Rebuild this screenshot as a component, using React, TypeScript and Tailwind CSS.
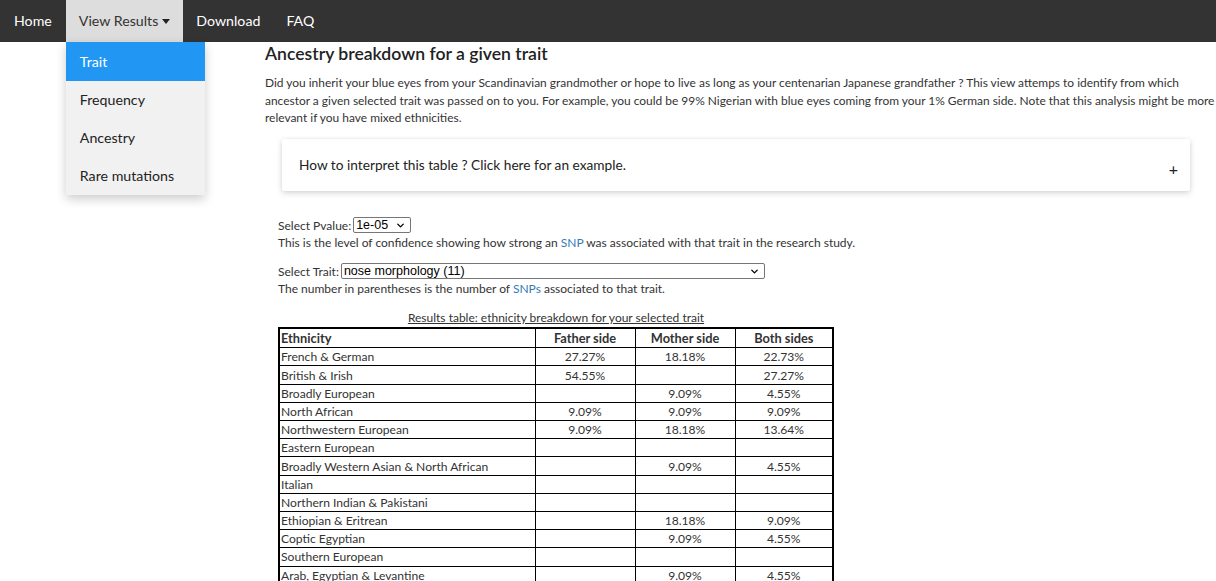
import { ChevronDown } from "lucide-react";

const rows: [string, string, string, string][] = [
  ["French & German", "27.27%", "18.18%", "22.73%"],
  ["British & Irish", "54.55%", "", "27.27%"],
  ["Broadly European", "", "9.09%", "4.55%"],
  ["North African", "9.09%", "9.09%", "9.09%"],
  ["Northwestern European", "9.09%", "18.18%", "13.64%"],
  ["Eastern European", "", "", ""],
  ["Broadly Western Asian & North African", "", "9.09%", "4.55%"],
  ["Italian", "", "", ""],
  ["Northern Indian & Pakistani", "", "", ""],
  ["Ethiopian & Eritrean", "", "18.18%", "9.09%"],
  ["Coptic Egyptian", "", "9.09%", "4.55%"],
  ["Southern European", "", "", ""],
  ["Arab, Egyptian & Levantine", "", "9.09%", "4.55%"],
  ["Ashkenazi Jewish", "", "", ""],
];

function FakeSelect({ value, width }: { value: string; width: string }) {
  return (
    <span className={`inline-flex h-[16px] items-center justify-between rounded-[2px] border border-[#767676] bg-white pl-[2px] pr-[4px] align-middle text-[12.5px] text-black ${width}`} style={{ fontFamily: '"Liberation Sans", Arial, sans-serif' }}>
      <span className="leading-none">{value}</span>
      <ChevronDown className="h-[11px] w-[11px]" strokeWidth={3} />
    </span>
  );
}

export default function App() {
  return (
    <div className="h-[581px] overflow-hidden bg-white text-[#333]" style={{ fontFamily: 'Lato, "Open Sans", sans-serif' }}>
      <nav className="relative flex h-[42px] items-stretch bg-[#333] text-[14.2px] text-white">
        <a className="flex items-center px-[14px]">Home</a>
        <div className="relative">
          <a className="flex h-full items-center gap-[4px] bg-[#ddd] pl-[13px] pr-[13px] text-[#333]">
            View Results
            <svg width="8" height="5" viewBox="0 0 8 5"><path d="M0 0h8L4 5z" fill="#222" /></svg>
          </a>
          <div className="absolute left-0 top-[42px] z-10 w-[139px] bg-[#f1f1f1] text-[14.2px] text-[#222] shadow-[0_4px_10px_rgba(0,0,0,0.2)]">
            <div className="flex h-[39px] items-center bg-[#2196f3] px-[14px] text-white">Trait</div>
            <div className="flex h-[38px] items-center px-[14px]">Frequency</div>
            <div className="flex h-[38px] items-center px-[14px]">Ancestry</div>
            <div className="flex h-[38px] items-center px-[14px]">Rare mutations</div>
          </div>
        </div>
        <a className="flex items-center px-[13px]">Download</a>
        <a className="flex items-center px-[13px]">FAQ</a>
      </nav>

      <main className="ml-[265px] w-[956px]">
        <h2 className="mt-[1px] text-[17.6px] font-semibold leading-[22px] text-[#222]">Ancestry breakdown for a given trait</h2>
        <p className="mt-[9px] text-[11.95px] leading-[17.6px]">
          Did you inherit your blue eyes from your Scandinavian grandmother or hope to live as long as your centenarian Japanese grandfather ? This view attemps to identify from which ancestor a given selected trait was passed on to you. For example, you could be 99% Nigerian with blue eyes coming from your 1% German side. Note that this analysis might be more relevant if you have mixed ethnicities.
        </p>

        <div className="ml-[17px] mt-[12px] flex h-[52px] w-[908px] items-center justify-between rounded-[2px] bg-white pl-[17px] pr-[12px] shadow-[0_2px_6px_rgba(0,0,0,0.16),0_0_3px_rgba(0,0,0,0.06)]">
          <span className="text-[13.7px] text-[#222]">How to interpret this table ? Click here for an example.</span>
          <span className="mt-[8px] text-[16px] leading-none text-[#222]">+</span>
        </div>

        <div className="ml-[13px] mt-[26px] text-[12px] leading-[17px]">
          <div className="flex items-center gap-[2px]">
            <span>Select Pvalue:</span>
            <FakeSelect value="1e-05" width="w-[58px]" />
          </div>
          <div>
            This is the level of confidence showing how strong an <span className="text-[#337ab7]">SNP</span> was associated with that trait in the research study.
          </div>
          <div className="mt-[12px] flex items-center gap-[2px]">
            <span>Select Trait:</span>
            <FakeSelect value="nose morphology (11)" width="w-[424px]" />
          </div>
          <div>
            The number in parentheses is the number of <span className="text-[#337ab7]">SNPs</span> associated to that trait.
          </div>

          <table className="mt-[12px] w-[556px] border-collapse border-2 border-black text-[12.1px] leading-[17px]">
            <caption className="pb-[1px] text-[12px] underline">Results table: ethnicity breakdown for your selected trait</caption>
            <thead>
              <tr className="h-[20px]">
                <th className="w-[256px] border border-black pl-[1px] text-left text-[12.8px] font-bold">Ethnicity</th>
                <th className="w-[100px] border border-black text-center text-[12.8px] font-bold">Father side</th>
                <th className="w-[100px] border border-black text-center text-[12.8px] font-bold">Mother side</th>
                <th className="border border-black text-center text-[12.8px] font-bold">Both sides</th>
              </tr>
            </thead>
            <tbody>
              {rows.map((r) => (
                <tr key={r[0]} className="h-[18.2px]">
                  <td className="border border-black pl-[1px]">{r[0]}</td>
                  <td className="border border-black text-center">{r[1]}</td>
                  <td className="border border-black text-center">{r[2]}</td>
                  <td className="border border-black text-center">{r[3]}</td>
                </tr>
              ))}
            </tbody>
          </table>
        </div>
      </main>
    </div>
  );
}
